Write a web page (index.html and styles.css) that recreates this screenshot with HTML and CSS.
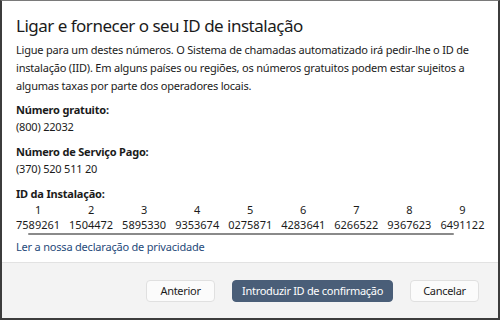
FILE: index.html
```html
<!DOCTYPE html>
<html lang="pt">
<head>
  <meta charset="UTF-8">
  <meta name="viewport" content="width=device-width, initial-scale=1.0">
  <title>Ligar e fornecer o seu ID de instalação</title>
  <link rel="stylesheet" href="styles.css">
</head>
<body>
  <div class="dialog">
    <div class="content">
      <h1>Ligar e fornecer o seu ID de instalação</h1>
      <p class="intro">Ligue para um destes números. O Sistema de chamadas automatizado irá pedir-lhe o ID de instalação (IID). Em alguns países ou regiões, os números gratuitos podem estar sujeitos a algumas taxas por parte dos operadores locais.</p>

      <div class="field">
        <h3>Número gratuito:</h3>
        <div>(800) 22032</div>
      </div>

      <div class="field">
        <h3>Número de Serviço Pago:</h3>
        <div>(370) 520 511 20</div>
      </div>

      <div class="field">
        <h3>ID da Instalação:</h3>
        <div class="iid">
          <div class="group"><span>1</span><span>7589261</span></div>
          <div class="group"><span>2</span><span>1504472</span></div>
          <div class="group"><span>3</span><span>5895330</span></div>
          <div class="group"><span>4</span><span>9353674</span></div>
          <div class="group"><span>5</span><span>0275871</span></div>
          <div class="group"><span>6</span><span>4283641</span></div>
          <div class="group"><span>7</span><span>6266522</span></div>
          <div class="group"><span>8</span><span>9367623</span></div>
          <div class="group"><span>9</span><span>6491122</span></div>
        </div>
        <div class="scrollbar"></div>
      </div>

      <a class="link" href="#">Ler a nossa declaração de privacidade</a>
    </div>

    <div class="footer">
      <button class="btn">Anterior</button>
      <button class="btn primary">Introduzir ID de confirmação</button>
      <button class="btn">Cancelar</button>
    </div>
  </div>
</body>
</html>
```

FILE: styles.css
```css
html, body {
  margin: 0;
  padding: 0;
  height: 100%;
}

body {
  font-family: "Noto Sans", "Open Sans", sans-serif;
  font-size: 11px;
  letter-spacing: -0.2px;
  color: #1b1b1b;
  background: #3a3a3a;
}

.dialog {
  box-sizing: border-box;
  height: 320px;
  width: 500px;
  border-top: 1px solid #7a7a7a;
  border-left: 2px solid #3c3c3c;
  border-right: 2px solid #3c3c3c;
  border-bottom: 2px solid #3c3c3c;
  background: #ffffff;
  display: flex;
  flex-direction: column;
  overflow: hidden;
}

.content {
  flex: 1;
  padding: 12px 14px 0;
}

h1 {
  margin: 0 0 2px;
  font-size: 17px;
  font-weight: 400;
  letter-spacing: -0.5px;
  line-height: 26px;
}

.intro {
  margin: 0 0 6px;
  line-height: 18px;
}

.field {
  margin-bottom: 8px;
  line-height: 17px;
}

.field h3 {
  margin: 0;
  font-size: 11px;
  font-weight: 700;
}

.iid {
  display: flex;
  gap: 9px;
  line-height: 15px;
  letter-spacing: 0;
}

.iid .group {
  display: flex;
  flex-direction: column;
  align-items: center;
}

.scrollbar {
  height: 2px;
  margin: 1px 30px 0 12px;
  background: #8a8a8a;
  border-radius: 1px;
}

.link {
  display: block;
  margin-top: -5px;
  line-height: 18px;
  color: #1f4a7a;
  text-decoration: none;
}

.footer {
  height: 55px;
  flex: none;
  background: #f3f3f3;
  border-top: 1px solid #e2e2e2;
  display: flex;
  align-items: center;
  justify-content: flex-end;
  gap: 17px;
  padding: 0 19px 0 0;
}

.btn {
  font-family: inherit;
  font-size: 11px;
  letter-spacing: -0.3px;
  height: 22px;
  min-width: 69px;
  padding: 0 9px;
  border-radius: 4px;
  border: 1px solid #e0e0e0;
  background: #fbfbfb;
  color: #1b1b1b;
}

.btn.primary {
  background: #4a5e78;
  border-color: #4a5e78;
  color: #ffffff;
}
```
